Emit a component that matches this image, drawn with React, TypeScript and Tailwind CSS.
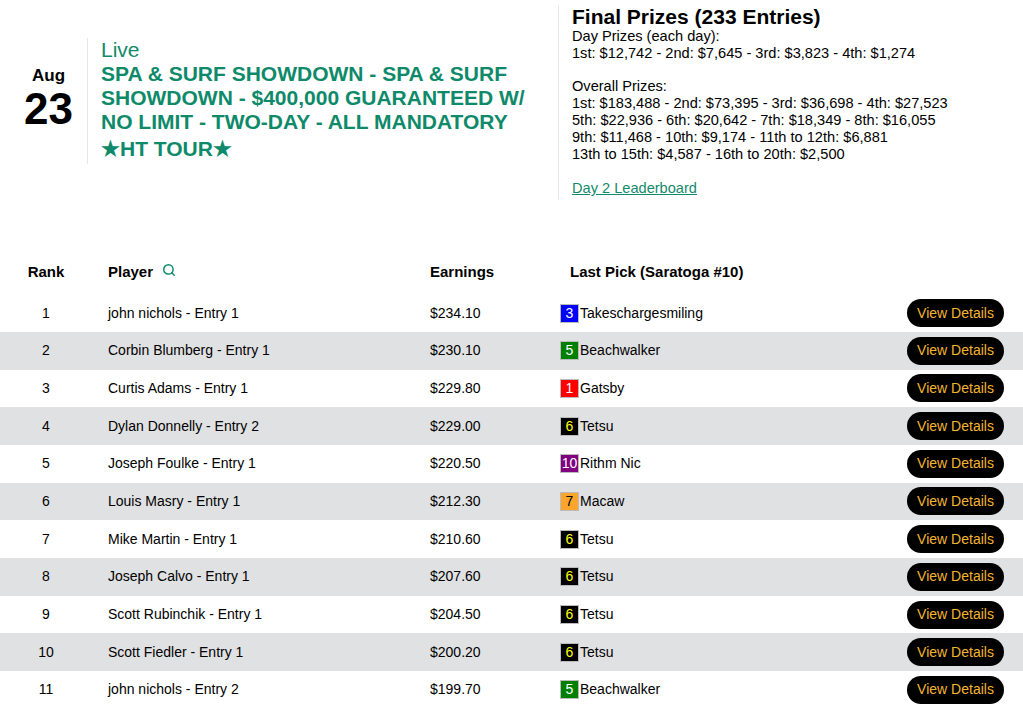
import { Search } from "lucide-react";

type Row = {
  rank: number;
  player: string;
  earnings: string;
  num: string;
  horse: string;
};

const rows: Row[] = [
  { rank: 1, player: "john nichols - Entry 1", earnings: "$234.10", num: "3", horse: "Takeschargesmiling" },
  { rank: 2, player: "Corbin Blumberg - Entry 1", earnings: "$230.10", num: "5", horse: "Beachwalker" },
  { rank: 3, player: "Curtis Adams - Entry 1", earnings: "$229.80", num: "1", horse: "Gatsby" },
  { rank: 4, player: "Dylan Donnelly - Entry 2", earnings: "$229.00", num: "6", horse: "Tetsu" },
  { rank: 5, player: "Joseph Foulke - Entry 1", earnings: "$220.50", num: "10", horse: "Rithm Nic" },
  { rank: 6, player: "Louis Masry - Entry 1", earnings: "$212.30", num: "7", horse: "Macaw" },
  { rank: 7, player: "Mike Martin - Entry 1", earnings: "$210.60", num: "6", horse: "Tetsu" },
  { rank: 8, player: "Joseph Calvo - Entry 1", earnings: "$207.60", num: "6", horse: "Tetsu" },
  { rank: 9, player: "Scott Rubinchik - Entry 1", earnings: "$204.50", num: "6", horse: "Tetsu" },
  { rank: 10, player: "Scott Fiedler - Entry 1", earnings: "$200.20", num: "6", horse: "Tetsu" },
  { rank: 11, player: "john nichols - Entry 2", earnings: "$199.70", num: "5", horse: "Beachwalker" },
];

// saddle cloth colours by program number
const badgeClass: Record<string, string> = {
  "1": "bg-[#ff0000] text-white",
  "3": "bg-[#0000ff] text-white",
  "5": "bg-[#008000] text-white",
  "6": "bg-black text-[#ffff00]",
  "7": "bg-[#fba52c] text-black",
  "10": "bg-[#800080] text-white",
};

const cols = "grid grid-cols-[92px_338px_130px_1fr_auto] items-center";

export default function App() {
  return (
    <div className="w-[1023px] h-[709px] overflow-hidden bg-white text-black font-['Liberation_Sans',Arial,sans-serif]">
      {/* HEADER */}
      <div className="flex pt-[5px]">
        <div className="w-[558px] flex items-center">
          <div className="ml-[10px] w-[77px] text-center font-bold -mt-[8px]">
            <div className="text-[17px] leading-[20px]">Aug</div>
            <div className="text-[44px] leading-[46px]">23</div>
          </div>
          <div className="border-l border-[#e6e6e6] pl-[13px] w-[455px] text-[#0e8a6a] -mt-[4px]">
            <div className="text-[21px] leading-[24px]">Live</div>
            <div className="text-[21px] leading-[24px] font-bold">
              SPA &amp; SURF SHOWDOWN - SPA &amp; SURF SHOWDOWN - $400,000 GUARANTEED W/ NO LIMIT - TWO-DAY - ALL MANDATORY{" "}
              <span className="inline-block leading-[30px]">★HT TOUR★</span>
            </div>
          </div>
        </div>
        <div className="border-l border-[#e6e6e6] pl-[13px] pb-[3px] text-[14.6px] leading-[16.8px]">
          <div className="text-[21px] leading-[23px] font-bold">Final Prizes (233 Entries)</div>
          <div>Day Prizes (each day):</div>
          <div>1st: $12,742 - 2nd: $7,645 - 3rd: $3,823 - 4th: $1,274</div>
          <div className="h-[16.8px]" />
          <div>Overall Prizes:</div>
          <div>1st: $183,488 - 2nd: $73,395 - 3rd: $36,698 - 4th: $27,523</div>
          <div>5th: $22,936 - 6th: $20,642 - 7th: $18,349 - 8th: $16,055</div>
          <div>9th: $11,468 - 10th: $9,174 - 11th to 12th: $6,881</div>
          <div>13th to 15th: $4,587 - 16th to 20th: $2,500</div>
          <div className="h-[18px]" />
          <a href="#" className="text-[#138a6c] underline">Day 2 Leaderboard</a>
        </div>
      </div>

      {/* TABLE */}
      <div className="mt-[50px]">
        <div className={`${cols} h-[44px] text-[15px] font-bold`}>
          <div className="text-center">Rank</div>
          <div className="pl-4 flex items-center gap-[9px]">
            Player <Search size={14} strokeWidth={2.5} className="text-[#0e8a6a] -mt-[4px]" />
          </div>
          <div>Earnings</div>
          <div className="pl-[10px]">Last Pick (Saratoga #10)</div>
          <div />
        </div>
        {rows.map((r) => (
          <div
            key={r.rank}
            className={`${cols} h-[37.7px] text-[14px] ${r.rank % 2 === 0 ? "bg-[#e0e1e3]" : "bg-white"}`}
          >
            <div className="text-center">{r.rank}</div>
            <div className="pl-4">{r.player}</div>
            <div>{r.earnings}</div>
            <div className="flex items-center">
              <span
                className={`w-[19px] h-[19px] flex items-center justify-center text-[14px] leading-none pb-[1px] border border-[#bbb] ${badgeClass[r.num]}`}
              >
                {r.num}
              </span>
              <span className="ml-[1px]">{r.horse}</span>
            </div>
            <div className="pr-[19px]">
              <button className="w-[97px] h-[28px] rounded-full bg-black text-[#f3b52f] text-[14px]">
                View Details
              </button>
            </div>
          </div>
        ))}
      </div>
    </div>
  );
}
